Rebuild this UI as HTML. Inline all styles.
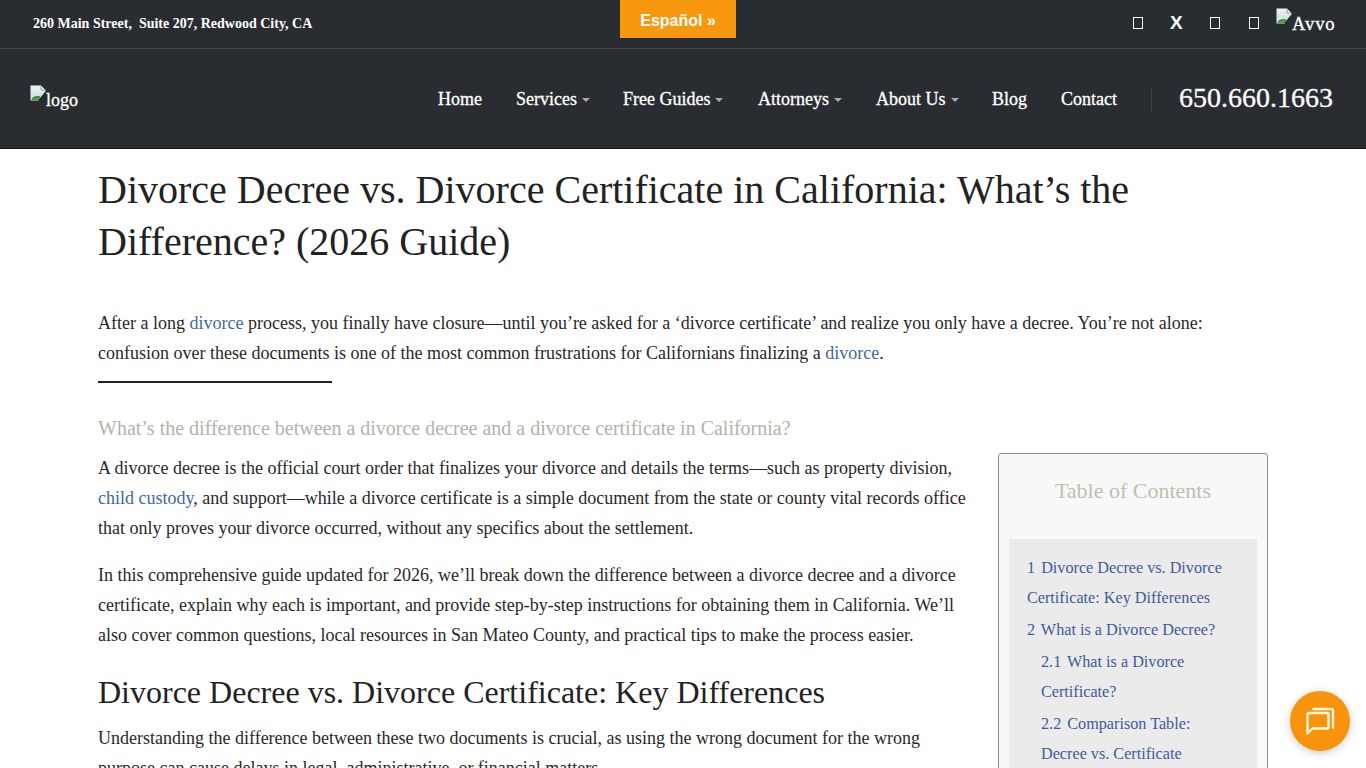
<!DOCTYPE html>
<html><head><meta charset="utf-8">
<style>
*{margin:0;padding:0;box-sizing:border-box}
html,body{width:1366px;height:768px;overflow:hidden;background:#fff}
body{font-family:"Liberation Serif",serif;color:#222;position:relative}
.abs{position:absolute;white-space:nowrap}
#topbar{position:absolute;left:0;top:0;width:1366px;height:48px;background:#292d31}
#topline{position:absolute;left:0;top:48px;width:1366px;height:1px;background:#45494d}
#header{position:absolute;left:0;top:49px;width:1366px;height:100px;background:linear-gradient(to bottom,#292d31 0,#292d31 95px,#2e2f33 95px,#2e2f33 96px,#222 96px,#222 97px,#333 97px,#333 98px,#222 98px,#222 99px,#1a1a1a 99px)}
#addr{left:33px;top:16px;font-size:14px;font-weight:bold;color:#fff}
#esp{position:absolute;left:620px;top:0;width:116px;height:38px;background:#f8980f;color:#fff;font-family:"Liberation Sans",sans-serif;font-weight:bold;font-size:16px;text-align:center;line-height:41px}
.soc{position:absolute;top:17px;width:10px;height:12px;border:1px solid #fff}
#xlogo{left:1170px;top:12px;font-family:"Liberation Sans",sans-serif;font-weight:bold;font-size:19px;color:#fff}
.nav{top:89px;font-size:18px;color:#fff;-webkit-text-stroke:0.3px #fff}
.caret{display:inline-block;width:0;height:0;border-left:4px solid transparent;border-right:4px solid transparent;border-top:4px solid #aaa;vertical-align:middle;margin-left:5px;margin-top:-2px}
#phone{left:1179px;top:82px;font-size:28px;color:#fff;-webkit-text-stroke:0.3px #fff}
#sep{position:absolute;left:1151px;top:88px;width:1px;height:24px;background:#3d4247}
h1{position:absolute;left:98px;top:164px;width:1100px;font-weight:normal;font-size:40px;line-height:52px;color:#222}
.p{position:absolute;left:98px;font-size:18px;line-height:30px;color:#282828}
a{color:#41699f;text-decoration:none}
#rule{position:absolute;left:98px;top:381px;width:234px;height:2px;background:#222}
#q{left:98px;top:417px;font-size:20px;color:#b3b3a8}
h2{position:absolute;left:98px;top:674px;font-weight:normal;font-size:32px;color:#222;white-space:nowrap}
#toc{position:absolute;left:998px;top:453px;width:270px;height:340px;border:1px solid #8c8c8c;border-radius:3px;background:#f8f8f8}
#toct{position:absolute;left:0;top:24px;width:268px;text-align:center;font-size:22px;color:#c2bdb0}
#tocin{position:absolute;left:10px;top:85px;width:248px;height:260px;background:#ebebeb}
.ti{position:absolute;font-size:16.2px;color:#3d5c9e;white-space:nowrap}
.n{margin-right:2px}
#chat{position:absolute;left:1290px;top:691px;width:60px;height:60px;border-radius:50%;background:#f7930d;box-shadow:0 2px 8px rgba(0,0,0,.2)}
</style></head><body>
<div id="topbar">
  <div class="abs" id="addr">260 Main Street,&nbsp; Suite 207, Redwood City, CA</div>
  <div id="esp">Español »</div>
  <div class="soc" style="left:1133px"></div>
  <div class="abs" id="xlogo">X</div>
  <div class="soc" style="left:1210px"></div>
  <div class="soc" style="left:1249px"></div>
  <svg width="16" height="16" viewBox="0 0 16 16" style="position:absolute;left:1276px;top:8px"><defs><linearGradient id="sk2" x1="0" y1="0" x2="0" y2="1"><stop offset="0" stop-color="#f2f2f4"/><stop offset="0.6" stop-color="#cfe6ea"/></linearGradient></defs><path d="M0.5 0.5H11L15.5 5V8L9 15.5H0.5Z" fill="url(#sk2)"/><path d="M1 15.5C3 11 6 10.5 10 11.5L9 15.5Z" fill="#5f9a4f"/><path d="M2 14C4 12 7 11.5 10 12" stroke="#3f7a35" stroke-width="1" fill="none"/><path d="M16 7L9 15.5" stroke="#14301f" stroke-width="1.6"/><path d="M11 0.5V5H15.5" stroke="#8a8a8a" stroke-width="0.8" fill="none"/></svg>
  <div class="abs" style="left:1292px;top:12.5px;font-size:18.6px;letter-spacing:0.9px;color:#fff;-webkit-text-stroke:0.3px #fff">Avvo</div>
</div>
<div id="topline"></div>
<div id="header"></div>
<svg width="16" height="16" viewBox="0 0 16 16" style="position:absolute;left:30px;top:85px"><defs><linearGradient id="sk1" x1="0" y1="0" x2="0" y2="1"><stop offset="0" stop-color="#f2f2f4"/><stop offset="0.6" stop-color="#cfe6ea"/></linearGradient></defs><path d="M0.5 0.5H11L15.5 5V8L9 15.5H0.5Z" fill="url(#sk1)"/><path d="M1 15.5C3 11 6 10.5 10 11.5L9 15.5Z" fill="#5f9a4f"/><path d="M2 14C4 12 7 11.5 10 12" stroke="#3f7a35" stroke-width="1" fill="none"/><path d="M16 7L9 15.5" stroke="#14301f" stroke-width="1.6"/><path d="M11 0.5V5H15.5" stroke="#8a8a8a" stroke-width="0.8" fill="none"/></svg>
<div class="abs" style="left:46px;top:90px;font-size:18px;color:#fff;-webkit-text-stroke:0.3px #fff">logo</div>
<div class="abs nav" style="left:438px">Home</div>
<div class="abs nav" style="left:516px">Services<span class="caret"></span></div>
<div class="abs nav" style="left:623px">Free Guides<span class="caret"></span></div>
<div class="abs nav" style="left:758px">Attorneys<span class="caret"></span></div>
<div class="abs nav" style="left:876px">About Us<span class="caret"></span></div>
<div class="abs nav" style="left:992px">Blog</div>
<div class="abs nav" style="left:1061px">Contact</div>
<div id="sep"></div>
<div class="abs" id="phone">650.660.1663</div>

<h1>Divorce Decree vs. Divorce Certificate in California: What’s the<br>Difference? (2026 Guide)</h1>
<div class="p" style="top:308px;width:1170px">After a long <a>divorce</a> process, you finally have closure—until you’re asked for a ‘divorce certificate’ and realize you only have a decree. You’re not alone:<br>confusion over these documents is one of the most common frustrations for Californians finalizing a <a>divorce</a>.</div>
<div id="rule"></div>
<div class="abs" id="q">What’s the difference between a divorce decree and a divorce certificate in California?</div>
<div class="p" style="top:453px">A divorce decree is the official court order that finalizes your divorce and details the terms—such as property division,<br><a>child custody</a>, and support—while a divorce certificate is a simple document from the state or county vital records office<br>that only proves your divorce occurred, without any specifics about the settlement.</div>
<div class="p" style="top:560px">In this comprehensive guide updated for 2026, we’ll break down the difference between a divorce decree and a divorce<br>certificate, explain why each is important, and provide step-by-step instructions for obtaining them in California. We’ll<br>also cover common questions, local resources in San Mateo County, and practical tips to make the process easier.</div>
<h2>Divorce Decree vs. Divorce Certificate: Key Differences</h2>
<div class="p" style="top:723px">Understanding the difference between these two documents is crucial, as using the wrong document for the wrong<br>purpose can cause delays in legal, administrative, or financial matters.</div>

<div id="toc">
  <div id="toct">Table of Contents</div>
  <div id="tocin"></div>
</div>
<div class="ti" style="left:1027px;top:559px"><span class="n">1</span> Divorce Decree vs. Divorce</div>
<div class="ti" style="left:1027px;top:589px">Certificate: Key Differences</div>
<div class="ti" style="left:1027px;top:621px"><span class="n">2</span> What is a Divorce Decree?</div>
<div class="ti" style="left:1041px;top:653px"><span class="n">2.1</span> What is a Divorce</div>
<div class="ti" style="left:1041px;top:683px">Certificate?</div>
<div class="ti" style="left:1041px;top:715px"><span class="n">2.2</span> Comparison Table:</div>
<div class="ti" style="left:1041px;top:745px">Decree vs. Certificate</div>
<div id="chat"><svg width="60" height="60" viewBox="0 0 60 60" style="position:absolute;left:0;top:0"><path d="M23.5 18H41.5Q43 18 43 19.5V36.5" stroke="#fff8dc" stroke-width="2.4" fill="none" stroke-linecap="round" stroke-linejoin="round"/><path d="M19 22H37Q38.5 22 38.5 23.5V36Q38.5 37.5 37 37.5H22.5L17.5 42.5V23.5Q17.5 22 19 22Z" stroke="#fff8dc" stroke-width="2.4" fill="none" stroke-linejoin="round"/></svg></div>
</body></html>
